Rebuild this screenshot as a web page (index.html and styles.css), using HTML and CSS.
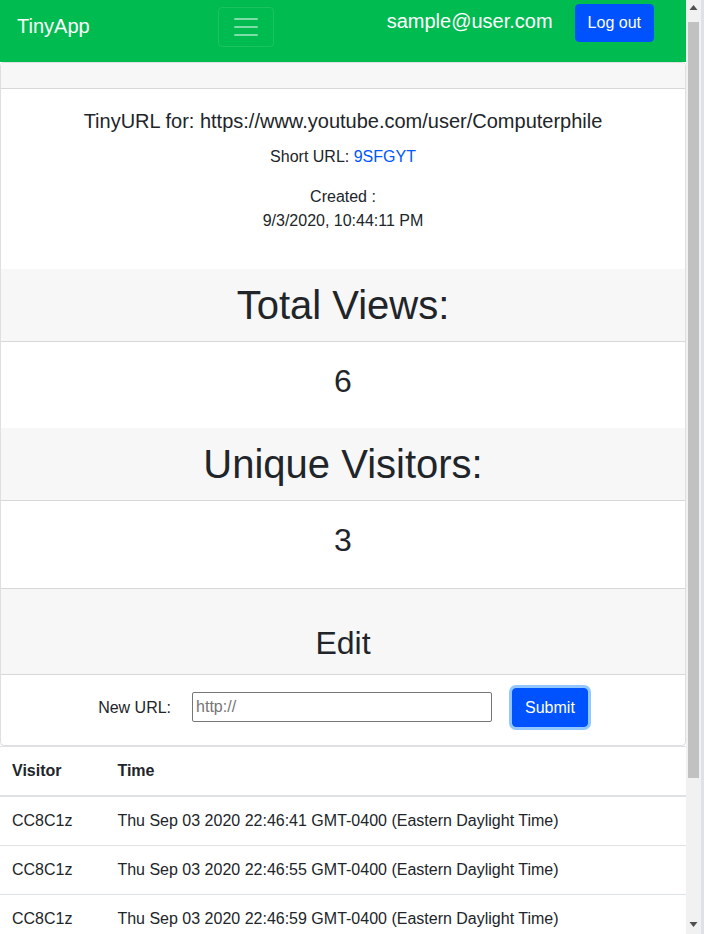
FILE: index.html
```html
<!DOCTYPE html>
<html lang="en">
<head>
<meta charset="utf-8">
<title>TinyApp</title>
<link rel="stylesheet" href="styles.css">
</head>
<body>
<div class="app">
  <nav class="navbar">
    <a class="brand" href="#">TinyApp</a>
    <button class="toggler" type="button" aria-label="Toggle navigation">
      <svg class="toggler-icon" width="30" height="30" viewBox="0 0 30 30"><path d="M4 7h22M4 15h22M4 23h22" stroke="rgba(255,255,255,0.5)" stroke-width="2" stroke-linecap="round"/></svg>
    </button>
    <div class="user-group">
      <span class="user">sample@user.com</span>
      <button class="btn logout" type="button">Log out</button>
    </div>
  </nav>

  <div class="card">
    <div class="card-header top-header"></div>
    <div class="card-body info">
      <h5 class="card-title">TinyURL for: https://www.youtube.com/user/Computerphile</h5>
      <p>Short URL: <a href="#">9SFGYT</a></p>
      <p>Created :<br>9/3/2020, 10:44:11 PM</p>
    </div>
    <div class="card-header"><h1>Total Views:</h1></div>
    <div class="card-body stat"><h2>6</h2></div>
    <div class="card-header"><h1>Unique Visitors:</h1></div>
    <div class="card-body stat"><h2>3</h2></div>
    <div class="card-footer edit-header"><h2>Edit</h2></div>
    <form class="edit-form">
      <label for="newurl">New URL:</label>
      <input id="newurl" type="text" placeholder="http://">
      <button class="btn submit" type="button">Submit</button>
    </form>
  </div>

  <table class="table">
    <thead>
      <tr><th>Visitor</th><th>Time</th></tr>
    </thead>
    <tbody>
      <tr><td>CC8C1z</td><td>Thu Sep 03 2020 22:46:41 GMT-0400 (Eastern Daylight Time)</td></tr>
      <tr><td>CC8C1z</td><td>Thu Sep 03 2020 22:46:55 GMT-0400 (Eastern Daylight Time)</td></tr>
      <tr><td>CC8C1z</td><td>Thu Sep 03 2020 22:46:59 GMT-0400 (Eastern Daylight Time)</td></tr>
      <tr><td>CC8C1z</td><td>Thu Sep 03 2020 22:47:03 GMT-0400 (Eastern Daylight Time)</td></tr>
      <tr><td>CC8C1z</td><td>Thu Sep 03 2020 22:47:10 GMT-0400 (Eastern Daylight Time)</td></tr>
      <tr><td>CC8C1z</td><td>Thu Sep 03 2020 22:47:15 GMT-0400 (Eastern Daylight Time)</td></tr>
    </tbody>
  </table>
</div>
<div class="scrollbar" aria-hidden="true">
  <div class="sb-btn"><svg width="15" height="17" viewBox="0 0 15 17"><polygon points="3.5,10 11.5,10 7.5,5" fill="#505050"/></svg></div>
  <div class="sb-track"><div class="sb-thumb"></div></div>
  <div class="sb-btn"><svg width="15" height="17" viewBox="0 0 15 17"><polygon points="3.5,5 11.5,5 7.5,10" fill="#505050"/></svg></div>
</div>
</body>
</html>
```

FILE: styles.css
```css
* { box-sizing: border-box; }

html, body { height: 100%; }

body {
  margin: 0;
  display: flex;
  height: 934px;
  overflow: hidden;
  font-family: "Liberation Sans", Arial, sans-serif;
  font-size: 16px;
  line-height: 1.5;
  color: #212529;
  background: #fff;
}

.app {
  width: 686px;
  flex: none;
  overflow: hidden;
}

/* navbar */
.navbar {
  display: flex;
  align-items: flex-start;
  height: 62px;
  padding: 0 32px 0 17px;
  background: #00bb4f;
}

.brand {
  width: 201px;
  margin-top: 11px;
  font-size: 20px;
  line-height: 30px;
  color: #fff;
  text-decoration: none;
}

.toggler {
  margin-top: 7px;
  width: 56px;
  height: 40px;
  padding: 0;
  display: flex;
  align-items: center;
  justify-content: center;
  background: transparent;
  border: 1px solid rgba(255, 255, 255, 0.1);
  border-radius: 4px;
}

.toggler-icon { display: block; }

.user-group {
  margin-left: auto;
  display: flex;
  align-items: flex-start;
}

.user {
  margin-top: 6px;
  margin-right: 22px;
  font-size: 20px;
  line-height: 30px;
  color: #fff;
}

.btn {
  font-family: inherit;
  font-size: 16px;
  line-height: 24px;
  padding: 6px 12px;
  color: #fff;
  background: #0052ff;
  border: 1px solid #0052ff;
  border-radius: 4px;
}

.logout { margin-top: 4px; }

/* card */
.card {
  border: 1px solid rgba(0, 0, 0, 0.125);
  border-radius: 4px;
  overflow: hidden;
}

.card-header {
  padding: 12px 20px;
  background: #f7f7f7;
  border-bottom: 1px solid rgba(0, 0, 0, 0.125);
  text-align: center;
}

.top-header { height: 26px; }

.card-body {
  padding: 20px;
  text-align: center;
}

.card-title {
  margin: 0 0 12px;
  font-size: 20px;
  font-weight: 500;
  line-height: 1.2;
}

p { margin: 0 0 16px; }

a { color: #0056ff; text-decoration: none; }

h1 {
  margin: 0;
  font-size: 40px;
  font-weight: 500;
  line-height: 1.2;
}

h2 {
  margin: 0 0 8px;
  font-size: 32px;
  font-weight: 500;
  line-height: 1.2;
}

.edit-header {
  padding: 35px 20px 12px;
  background: #f7f7f7;
  border-top: 1px solid rgba(0, 0, 0, 0.125);
  border-bottom: 1px solid rgba(0, 0, 0, 0.125);
  text-align: center;
}

.edit-header h2 { margin: 0; }

.edit-form {
  display: flex;
  align-items: center;
  justify-content: center;
  padding: 13px 0 18px;
  margin: 0;
}

.edit-form label {
  margin-right: 21px;
}

.edit-form input {
  width: 300px;
  height: 30px;
  padding: 1px 3px;
  font-family: inherit;
  font-size: 16px;
  color: #212529;
  border: 1px solid #767676;
  border-radius: 2px;
  margin: 0 20px 2px 0;
}

.edit-form input::placeholder { color: #757575; }

.submit {
  height: 39px;
  box-shadow: 0 0 0 3px rgba(38, 143, 255, 0.5);
}

/* table */
.table {
  width: 100%;
  margin-bottom: 16px;
  border-collapse: collapse;
}

.table th,
.table td {
  padding: 12px;
  text-align: left;
  vertical-align: top;
  border-top: 1px solid #dee2e6;
}

.table thead th {
  vertical-align: bottom;
  border-bottom: 2px solid #dee2e6;
  font-weight: 700;
}

/* fake browser scrollbar */
.scrollbar {
  width: 18px;
  flex: none;
  display: flex;
  flex-direction: column;
  background: #f1f1f1;
  border-right: 3px solid #dfe0e8;
}

.sb-btn {
  height: 17px;
  flex: none;
}

.sb-btn svg { display: block; }

.sb-track {
  flex: 1;
  padding: 5px 2px 0;
}

.sb-thumb {
  height: 756px;
  background: #c1c1c1;
}
```
